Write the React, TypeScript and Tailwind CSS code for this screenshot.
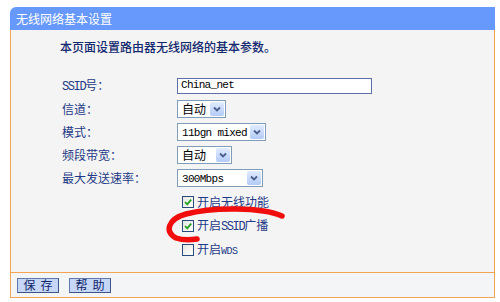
import type { ReactNode } from 'react'

const cjk = "font-['Noto_Sans_CJK_SC',sans-serif]"
const mono = "font-['Liberation_Mono','Noto_Sans_CJK_SC',monospace]"

function Latin({ children }: { children: ReactNode }) {
  return <span className={mono + ' text-[12px] tracking-[-1.4px]'}>{children}</span>
}

function Arrow() {
  return (
    <div className="flex h-[14px] w-[14px] items-center justify-center rounded-[2px] bg-gradient-to-b from-[#e1ebfe] to-[#b4cbf6]">
      <svg width="10" height="10" viewBox="0 0 10 10">
        <path d="M2 3.5 L5 6.5 L8 3.5" fill="none" stroke="#4a5f8c" strokeWidth="1.8" />
      </svg>
    </div>
  )
}

function Select({ className, children }: { className: string; children: ReactNode }) {
  return (
    <div className={'flex h-[18px] items-center justify-between border border-[#7f9db9] bg-white pl-[4px] pr-[1px] text-[12px] text-black ' + className}>
      <span className="leading-none">{children}</span>
      <Arrow />
    </div>
  )
}

function Check({ on }: { on: boolean }) {
  return (
    <span className="flex h-[12px] w-[12px] items-center justify-center border border-[#2a4a7a] bg-gradient-to-br from-[#e6e6e0] to-white">
      {on && (
        <svg width="10" height="10" viewBox="0 0 10 10">
          <path d="M2 5 L4.2 7.3 L8.2 2.6" fill="none" stroke="#21a121" strokeWidth="1.8" />
        </svg>
      )}
    </span>
  )
}

function Row({ label, children }: { label?: ReactNode; children: ReactNode }) {
  return (
    <div className="flex h-[23px] items-center">
      <div className="w-[166px] pl-[51px] text-[12px] leading-none text-[#1f3a86]">{label}</div>
      {children}
    </div>
  )
}

function CheckRow({ on, children }: { on: boolean; children: ReactNode }) {
  return (
    <div className="flex h-[24px] items-center pl-[171px] text-[12px] leading-none text-[#1f3a86]">
      <Check on={on} />
      <span className="ml-[3px]">{children}</span>
    </div>
  )
}

function Btn({ children }: { children: ReactNode }) {
  return (
    <div className="flex h-[15px] w-[42px] items-center justify-center border border-[#5d79b0] border-r-[#3d5488] border-b-[#3d5488] bg-[#c5d6f7] text-[12px] leading-none tracking-[5px] text-[#10256a]">
      <span className="pl-[5px]">{children}</span>
    </div>
  )
}

export default function App() {
  return (
    <div className={'relative h-[302px] w-[500px] overflow-hidden bg-white pt-[7px] ' + cjk}>
      <div className="ml-[10px] w-[485px]">
        <div className="flex h-[23px] items-center rounded-tl-[6px] bg-[#6799fd] pl-[6px] text-[12px] leading-none text-white">
          无线网络基本设置
        </div>
        <div className="border-x border-b border-[#f2a452] bg-[#f4f4f4] pb-[10px] pt-[8px]">
          <div className="flex h-[18px] items-center pl-[49px] text-[12px] font-medium leading-none text-[#13296e]">
            本页面设置路由器无线网络的基本参数。
          </div>
          <div className="mt-[18px]">
            <Row label={<><Latin>SSID</Latin>号：</>}>
              <div className="flex h-[16px] w-[195px] items-center border border-[#5c6fa6] bg-white pl-[3px]">
                <span className={mono + ' text-[11px] leading-none tracking-[-0.7px] text-black'}>China_net</span>
              </div>
            </Row>
            <Row label="信道：">
              <Select className="w-[49px]">自动</Select>
            </Row>
            <Row label="模式：">
              <Select className="w-[89px]"><span className={mono + ' text-[11px] tracking-[-0.7px]'}>11bgn mixed</span></Select>
            </Row>
            <Row label="频段带宽：">
              <Select className="w-[55px]">自动</Select>
            </Row>
            <Row label="最大发送速率：">
              <Select className="w-[86px]"><span className={mono + ' text-[11px] tracking-[-0.7px]'}>300Mbps</span></Select>
            </Row>
            <div className="mt-[1px]">
              <CheckRow on>开启无线功能</CheckRow>
              <CheckRow on>开启<Latin>SSID</Latin>广播</CheckRow>
              <CheckRow on={false}>开启<span className={mono + ' text-[10px] tracking-[-0.5px]'}>WDS</span></CheckRow>
            </div>
          </div>
        </div>
        <div className="flex h-[25px] items-center gap-[10px] border-x border-b border-[#f2a452] bg-[#f4f5f7] pl-[6px]">
          <Btn>保存</Btn>
          <Btn>帮助</Btn>
        </div>
      </div>
      <svg className="pointer-events-none absolute left-0 top-0" width="500" height="302" viewBox="0 0 500 302">
        <path
          d="M282 216 C262 207 212 207 186 214 C168 219 164 232 176 238 C182 240 190 240 197 239"
          fill="none"
          stroke="#f20d0d"
          strokeWidth="5.5"
          strokeLinecap="round"
        />
      </svg>
    </div>
  )
}
